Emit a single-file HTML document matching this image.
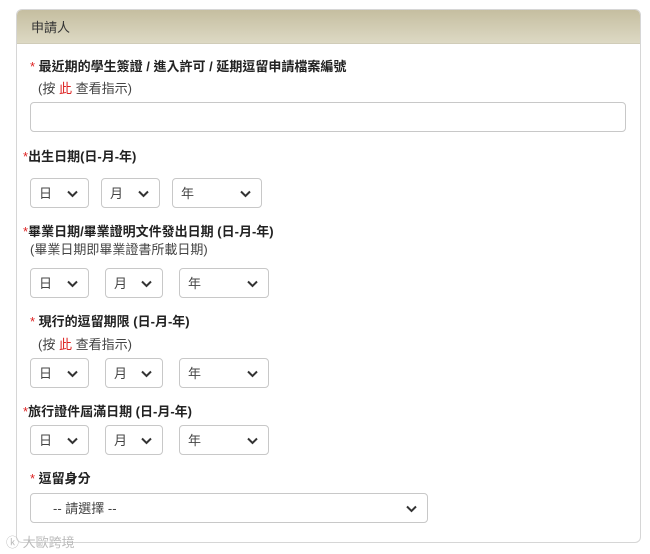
<!DOCTYPE html>
<html><head><meta charset="utf-8"><style>
*{margin:0;padding:0;box-sizing:border-box}
body{width:650px;height:554px;background:#fff;position:relative;overflow:hidden;font-family:"Liberation Sans","Noto Sans CJK TC",sans-serif;color:#222}
.panel{position:absolute;left:16px;top:9px;width:625px;height:534px;border:1px solid #d6d6d6;border-radius:6px;overflow:hidden}
.hd{height:34px;background:linear-gradient(#c5bea0,#ddd9c4);border-bottom:1px solid #d0ccb8;font-size:13px;color:#333;padding:7px 0 0 14px}
.a{position:absolute;font-size:13px;white-space:nowrap}
.b{font-weight:bold;color:#222}
.r{color:#d22}
.s{color:#444}
.sel{position:absolute;height:30px;border:1px solid #c8c8c8;border-radius:4px;background:#fff;font-size:13px;color:#444;padding:4px 0 0 8px}
.sel svg{position:absolute;right:10px;top:11px}
</style></head><body>
<div class="panel"><div class="hd">申請人</div></div>
<div class="a b" style="left:30px;top:56px"><span class="r" style="font-weight:normal">*</span> 最近期的學生簽證 / 進入許可 / 延期逗留申請檔案編號</div>
<div class="a s" style="left:38px;top:78px">(按 <span class="r">此</span> 查看指示)</div>
<div class="sel" style="left:30px;top:102px;width:596px"></div>

<div class="a b" style="left:23px;top:146px"><span class="r" style="font-weight:normal">*</span>出生日期(日-月-年)</div>
<div class="sel" style="left:30px;top:178px;width:59px">日<svg width="11" height="8"><path d="M1 1.5l4.5 4.5 4.5-4.5" stroke="#333" stroke-width="2" fill="none"/></svg></div>
<div class="sel" style="left:101px;top:178px;width:59px">月<svg width="11" height="8"><path d="M1 1.5l4.5 4.5 4.5-4.5" stroke="#333" stroke-width="2" fill="none"/></svg></div>
<div class="sel" style="left:172px;top:178px;width:90px">年<svg width="11" height="8"><path d="M1 1.5l4.5 4.5 4.5-4.5" stroke="#333" stroke-width="2" fill="none"/></svg></div>

<div class="a b" style="left:23px;top:221px"><span class="r" style="font-weight:normal">*</span>畢業日期/畢業證明文件發出日期 (日-月-年)</div>
<div class="a s" style="left:30px;top:239px">(畢業日期即畢業證書所載日期)</div>
<div class="sel" style="left:30px;top:268px;width:59px">日<svg width="11" height="8"><path d="M1 1.5l4.5 4.5 4.5-4.5" stroke="#333" stroke-width="2" fill="none"/></svg></div>
<div class="sel" style="left:105px;top:268px;width:58px">月<svg width="11" height="8"><path d="M1 1.5l4.5 4.5 4.5-4.5" stroke="#333" stroke-width="2" fill="none"/></svg></div>
<div class="sel" style="left:179px;top:268px;width:90px">年<svg width="11" height="8"><path d="M1 1.5l4.5 4.5 4.5-4.5" stroke="#333" stroke-width="2" fill="none"/></svg></div>

<div class="a b" style="left:30px;top:311px"><span class="r" style="font-weight:normal">*</span> 現行的逗留期限 (日-月-年)</div>
<div class="a s" style="left:38px;top:334px">(按 <span class="r">此</span> 查看指示)</div>
<div class="sel" style="left:30px;top:358px;width:59px">日<svg width="11" height="8"><path d="M1 1.5l4.5 4.5 4.5-4.5" stroke="#333" stroke-width="2" fill="none"/></svg></div>
<div class="sel" style="left:105px;top:358px;width:58px">月<svg width="11" height="8"><path d="M1 1.5l4.5 4.5 4.5-4.5" stroke="#333" stroke-width="2" fill="none"/></svg></div>
<div class="sel" style="left:179px;top:358px;width:90px">年<svg width="11" height="8"><path d="M1 1.5l4.5 4.5 4.5-4.5" stroke="#333" stroke-width="2" fill="none"/></svg></div>

<div class="a b" style="left:23px;top:401px"><span class="r" style="font-weight:normal">*</span>旅行證件屆滿日期 (日-月-年)</div>
<div class="sel" style="left:30px;top:425px;width:59px">日<svg width="11" height="8"><path d="M1 1.5l4.5 4.5 4.5-4.5" stroke="#333" stroke-width="2" fill="none"/></svg></div>
<div class="sel" style="left:105px;top:425px;width:58px">月<svg width="11" height="8"><path d="M1 1.5l4.5 4.5 4.5-4.5" stroke="#333" stroke-width="2" fill="none"/></svg></div>
<div class="sel" style="left:179px;top:425px;width:90px">年<svg width="11" height="8"><path d="M1 1.5l4.5 4.5 4.5-4.5" stroke="#333" stroke-width="2" fill="none"/></svg></div>

<div class="a b" style="left:30px;top:468px"><span class="r" style="font-weight:normal">*</span> 逗留身分</div>
<div class="sel" style="left:30px;top:493px;width:398px;padding-left:22px">-- 請選擇 --<svg width="11" height="8"><path d="M1 1.5l4.5 4.5 4.5-4.5" stroke="#333" stroke-width="2" fill="none"/></svg></div>

<div class="a" style="left:6px;top:532px;color:#bbb;font-size:13px">ⓚ 大歐跨境</div>
</body></html>
